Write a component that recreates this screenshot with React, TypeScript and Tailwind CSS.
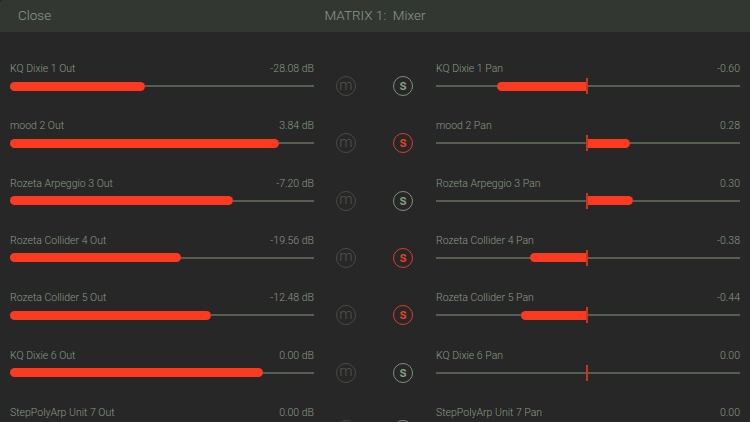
const font = { fontFamily: 'Roboto, "Liberation Sans", Arial, sans-serif' };

const rows = [
  { out: "KQ Dixie 1 Out", db: "-28.08 dB", fill: 135, pan: "KQ Dixie 1 Pan", val: "-0.60", p: -90, solo: false },
  { out: "mood 2 Out", db: "3.84 dB", fill: 269, pan: "mood 2 Pan", val: "0.28", p: 43, solo: true },
  { out: "Rozeta Arpeggio 3 Out", db: "-7.20 dB", fill: 223, pan: "Rozeta Arpeggio 3 Pan", val: "0.30", p: 46, solo: false },
  { out: "Rozeta Collider 4 Out", db: "-19.56 dB", fill: 171, pan: "Rozeta Collider 4 Pan", val: "-0.38", p: -57, solo: true },
  { out: "Rozeta Collider 5 Out", db: "-12.48 dB", fill: 201, pan: "Rozeta Collider 5 Pan", val: "-0.44", p: -66, solo: true },
  { out: "KQ Dixie 6 Out", db: "0.00 dB", fill: 253, pan: "KQ Dixie 6 Pan", val: "0.00", p: 0, solo: false },
  { out: "StepPolyArp Unit 7 Out", db: "0.00 dB", fill: 0, pan: "StepPolyArp Unit 7 Pan", val: "0.00", p: 0, solo: false },
];

function Line() {
  return <div className="h-[2px] flex-1 bg-[#555f52]" />;
}

function Label({ name, value }: { name: string; value: string }) {
  return (
    <div className="flex h-[14px] items-center justify-between text-[10.5px] font-light leading-[14px] text-[#8a9c86]">
      <span>{name}</span>
      <span>{value}</span>
    </div>
  );
}

function OutSlider({ fill }: { fill: number }) {
  return (
    <div className="mt-[5px] flex h-[10px] items-center">
      <div className="h-[9px] rounded-full bg-[#fc3a20]" style={{ width: fill }} />
      <Line />
    </div>
  );
}

function PanSlider({ p }: { p: number }) {
  const neg = p < 0 ? -p : 0;
  const pos = p > 0 ? p : 0;
  return (
    <div className="relative mt-[5px] flex h-[10px] items-center">
      <div className="flex h-full w-[151px] items-center">
        <Line />
        <div className="h-[9px] rounded-l-full bg-[#fc3a20]" style={{ width: neg }} />
      </div>
      <div className="flex h-full flex-1 items-center">
        <div className="h-[9px] rounded-r-full bg-[#fc3a20]" style={{ width: pos }} />
        <Line />
      </div>
      <div className="absolute left-[150px] top-[-3px] h-[16px] w-[2px] bg-[#c9351f]" />
    </div>
  );
}

function Round({ letter, kind }: { letter: string; kind: "m" | "on" | "off" }) {
  const cls =
    kind === "m"
      ? "border-[#464c44] text-[#4f574e] font-light text-[15px]"
      : kind === "on"
        ? "border-[#d6402b] text-[#e8432a] font-medium text-[14px]"
        : "border-[#7c9178] text-[#86a082] font-medium text-[14px]";
  return (
    <div className={`flex h-[20px] w-[20px] items-center justify-center rounded-full border pb-[2px] leading-none ${cls}`}>
      {letter}
    </div>
  );
}

export default function App() {
  return (
    <div className="flex h-[422px] w-[750px] flex-col overflow-hidden bg-[#272727]" style={font}>
      <header className="relative flex h-[32px] shrink-0 items-center justify-center rounded-tl-[4px] bg-[#333732] pb-[1px] text-[13.5px] font-light text-[#8a9c86]">
        <span className="absolute left-[18px]">Close</span>
        <span className="whitespace-pre">MATRIX 1:  Mixer</span>
      </header>
      <main className="flex flex-col pt-[30px]">
        {rows.map((r) => (
          <div key={r.out} className="flex h-[57.33px] shrink-0 pl-[10px] pr-[10px]">
            <div className="w-[304px] shrink-0">
              <Label name={r.out} value={r.db} />
              <OutSlider fill={r.fill} />
            </div>
            <div className="flex w-[122px] shrink-0 items-start pl-[22px] pt-[14px]">
              <Round letter="m" kind="m" />
              <div className="ml-[37px]">
                <Round letter="s" kind={r.solo ? "on" : "off"} />
              </div>
            </div>
            <div className="w-[304px] shrink-0">
              <Label name={r.pan} value={r.val} />
              <PanSlider p={r.p} />
            </div>
          </div>
        ))}
      </main>
    </div>
  );
}
